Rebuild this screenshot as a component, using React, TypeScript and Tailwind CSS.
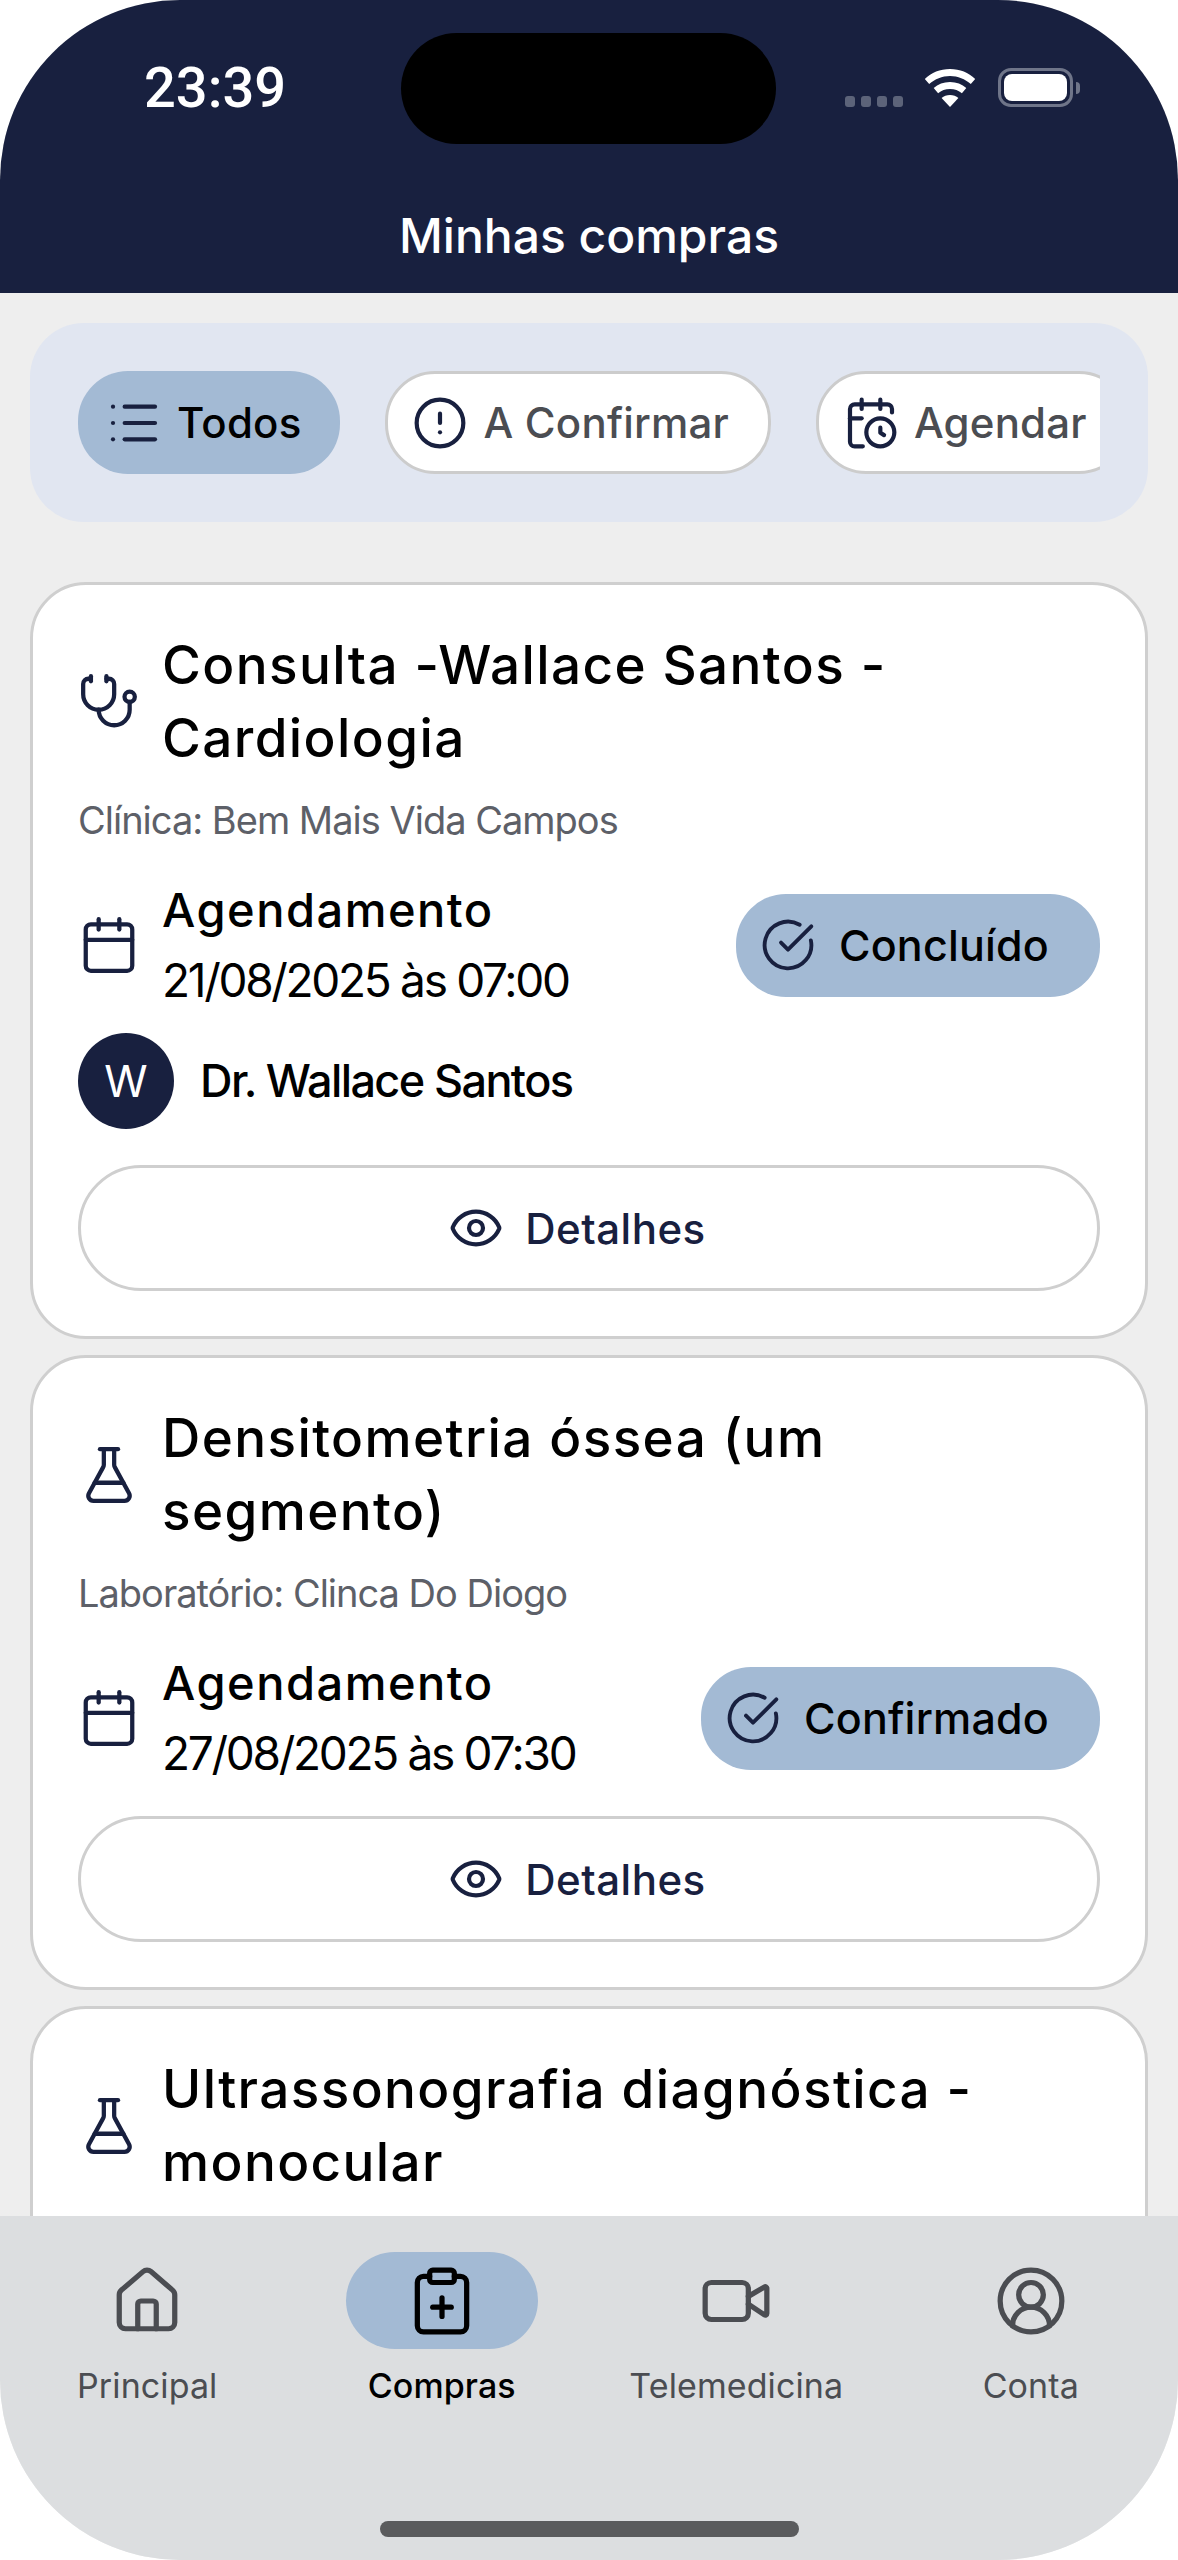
import {
  Calendar,
  CalendarClock,
  CircleAlert,
  CircleCheckBig,
  CircleUserRound,
  ClipboardPlus,
  Eye,
  FlaskConical,
  House,
  List,
  Stethoscope,
  Video,
} from 'lucide-react';
import type { LucideIcon } from 'lucide-react';

type Purchase = {
  icon: LucideIcon;
  title: string;
  // the last card runs under the tab bar, only its title is on screen
  details?: { place: string; date: string; status: string; doctor?: string };
};

const purchases: Purchase[] = [
  {
    icon: Stethoscope,
    title: 'Consulta -Wallace Santos - Cardiologia',
    details: {
      place: 'Clínica: Bem Mais Vida Campos',
      date: '21/08/2025 às 07:00',
      status: 'Concluído',
      doctor: 'Dr. Wallace Santos',
    },
  },
  {
    icon: FlaskConical,
    title: 'Densitometria óssea (um segmento)',
    details: {
      place: 'Laboratório: Clinca Do Diogo',
      date: '27/08/2025 às 07:30',
      status: 'Confirmado',
    },
  },
  {
    icon: FlaskConical,
    title: 'Ultrassonografia diagnóstica - monocular',
  },
];

const tabs = [
  { icon: House, label: 'Principal' },
  { icon: ClipboardPlus, label: 'Compras', active: true },
  { icon: Video, label: 'Telemedicina' },
  { icon: CircleUserRound, label: 'Conta' },
];

function StatusBar() {
  return (
    <div className="flex h-[132px] items-start justify-between pt-[56px] pl-[144px] pr-[98px]">
      <span className="font-['Roboto',sans-serif] text-[56px] leading-[64px] font-medium text-white">23:39</span>
      <div className="flex items-start">
        <div className="mt-[40px] flex gap-[6px]">
          {[0, 1, 2, 3].map((i) => (
            <span key={i} className="h-[11px] w-[10px] rounded-[3px] bg-[#5c6379]" />
          ))}
        </div>
        <svg viewBox="0 0 52 38" className="mt-[13px] ml-[21px] h-[38px] w-[52px]" fill="#fff">
          <path d="M26 0C16 0 7.500 3.700 .8 9.900l4.400 5.200C11 10 18 7 26 7s15 3 20.800 8.100l4.400-5.200C44.500 3.700 36 0 26 0z" />
          <path d="M26 13c-6.500 0-12 2.300-16.300 6l4.400 5.200C17.300 21.600 21.400 20 26 20s8.700 1.600 11.900 4.200l4.400-5.200C38 15.300 32.500 13 26 13z" />
          <path d="M26 26c-3.300 0-6.200 1.100-8.400 3L26 38l8.400-9c-2.200-1.900-5.100-3-8.400-3z" />
        </svg>
        <div className="mt-[12px] ml-[22px] flex items-center">
          <div className="h-[39px] w-[75px] rounded-[13px] border-[3px] border-[#6f7589] p-[3px]">
            <div className="h-full w-full rounded-[8px] bg-white" />
          </div>
          <div className="ml-[3px] h-[12px] w-[4px] rounded-r-full bg-[#6f7589]" />
        </div>
      </div>
    </div>
  );
}

function FilterChip({ icon: Icon, label, active }: { icon: LucideIcon; label: string; active?: boolean }) {
  return (
    <div
      className={
        active
          ? 'flex h-[103px] shrink-0 items-center gap-[15px] rounded-[50px] bg-[#a3bad4] pr-[39px] pl-[28px] text-black'
          : 'flex h-[103px] shrink-0 items-center gap-[15px] rounded-[50px] border-[3px] border-[#cccccc] bg-white pr-[39px] pl-[24px] text-[#4b4d52]'
      }
    >
      <Icon size={56} strokeWidth={1.8} className="text-[#18203f]" />
      <span className="text-[42px] leading-none font-medium tracking-[0.2px]">{label}</span>
    </div>
  );
}

function PurchaseCard({ purchase }: { purchase: Purchase }) {
  const { icon: Icon, details } = purchase;
  return (
    <article className="shrink-0 rounded-[56px] border-[3px] border-[#cfcfcf] bg-white px-[45px] pt-[44px] pb-[45px]">
      <div className="flex items-center">
        <Icon size={62} strokeWidth={1.65} className="shrink-0 text-[#18203f]" />
        <h3 className="ml-[22px] text-[53px] leading-[73px] font-medium tracking-[1.4px] text-black">{purchase.title}</h3>
      </div>
      {details ? (
        <>
          <p className="mt-[21px] text-[38px] leading-[48px] tracking-[-1px] text-[#5d6068]">{details.place}</p>
          <div className="mt-[31px] flex items-center justify-between">
            <div className="flex items-center">
              <Calendar size={62} strokeWidth={1.65} className="shrink-0 text-[#18203f]" />
              <div className="ml-[22px] text-black">
                <p className="text-[47px] leading-[70px] font-medium tracking-[1.5px]">Agendamento</p>
                <p className="text-[46px] leading-[70px] tracking-[-2.3px]">{details.date}</p>
              </div>
            </div>
            <div className="flex h-[103px] items-center gap-[23px] rounded-[50px] bg-[#a3bad4] pr-[51px] pl-[24px]">
              <CircleCheckBig size={56} strokeWidth={1.65} className="text-[#18203f]" />
              <span className="text-[43px] leading-none font-medium tracking-[0.2px] text-black">{details.status}</span>
            </div>
          </div>
          {details.doctor ? (
            <div className="mt-[18px] mb-[36px] flex items-center gap-[26px]">
              <div className="flex h-[96px] w-[96px] items-center justify-center rounded-full bg-[#18203f] text-[44px] text-white">W</div>
              <span className="text-[45px] font-medium tracking-[-1.6px] text-black">{details.doctor}</span>
            </div>
          ) : (
            <div className="h-[28px]" />
          )}
          <button className="flex h-[126px] w-full items-center justify-center gap-[21px] rounded-[63px] border-[3px] border-[#cfcfcf] pr-[24px] text-[#18203f]">
            <Eye size={56} strokeWidth={1.8} />
            <span className="text-[42px] font-medium tracking-[0.5px]">Detalhes</span>
          </button>
        </>
      ) : (
        <div className="h-[300px]" />
      )}
    </article>
  );
}

export default function App() {
  return (
    <div className="flex h-[2560px] w-[1178px] flex-col overflow-hidden rounded-[180px] bg-[#eeeeee] font-['Inter',sans-serif]">
      <header className="relative h-[293px] shrink-0 bg-[#18203f]">
        <StatusBar />
        <div className="absolute top-[33px] left-[401px] h-[111px] w-[375px] rounded-[56px] bg-black" />
        <h1 className="mt-[77px] text-center text-[48px] leading-[54px] font-medium text-white">Minhas compras</h1>
      </header>

      <main className="flex min-h-0 flex-1 flex-col overflow-hidden px-[30px] pt-[30px]">
        <div className="mb-[60px] shrink-0 rounded-[54px] bg-[#e1e6f1] px-[48px] py-[48px]">
          <div className="flex gap-[45px] overflow-hidden">
            <FilterChip icon={List} label="Todos" active />
            <FilterChip icon={CircleAlert} label="A Confirmar" />
            <FilterChip icon={CalendarClock} label="Agendar" />
          </div>
        </div>
        <div className="flex flex-col gap-[16px]">
          {purchases.map((p) => (
            <PurchaseCard key={p.title} purchase={p} />
          ))}
        </div>
      </main>

      <nav className="relative h-[344px] shrink-0 bg-[#dcdee0]">
        <div className="grid grid-cols-4 pt-[36px]">
          {tabs.map(({ icon: Icon, label, active }) => (
            <div key={label} className="flex flex-col items-center">
              <div className={active ? 'flex h-[97px] w-[192px] items-center justify-center rounded-[49px] bg-[#a3bad4] text-black' : 'flex h-[97px] w-[192px] items-center justify-center text-[#4b4d52]'}>
                <Icon size={74} strokeWidth={1.7} />
              </div>
              <span className={active ? 'mt-[17px] text-[34px] leading-[40px] font-medium tracking-[0.1px] text-black' : 'mt-[17px] text-[34px] leading-[40px] tracking-[0.1px] text-[#4b4d52]'}>{label}</span>
            </div>
          ))}
        </div>
        <div className="absolute top-[305px] left-[380px] h-[16px] w-[419px] rounded-full bg-[#5a5b5d]" />
      </nav>
    </div>
  );
}
